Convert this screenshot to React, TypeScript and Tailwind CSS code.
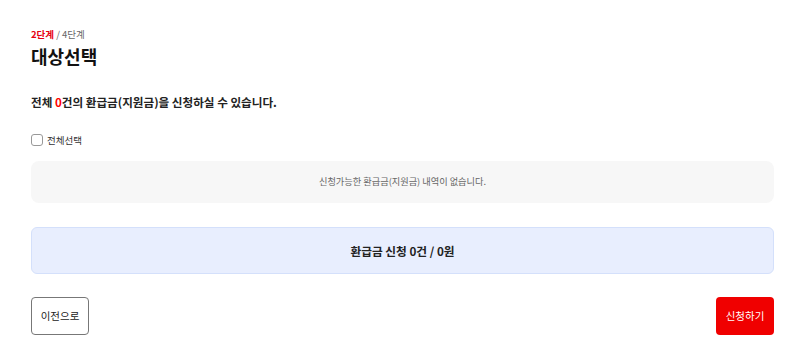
import { useState } from 'react';

const font = { fontFamily: '"Noto Sans CJK KR", "Noto Sans", sans-serif' };

const App = () => {
  const [checked, setChecked] = useState(false);

  return (
    <div
      className="w-[800px] h-[357px] bg-white pt-[27px] pl-[31px] pr-[26px] text-[#222]"
      style={font}
    >
      <p className="text-[9.5px] leading-[14px] text-[#666]">
        <span className="font-bold text-[#e60012]">2단계</span> / 4단계
      </p>
      <h1 className="mt-[3px] text-[18px] leading-[24px] font-bold text-[#111]">
        대상선택
      </h1>

      <p className="mt-[25px] text-[11.6px] leading-[18px] font-bold text-[#222]">
        전체 <span className="text-[#f00]">0</span>건의 환급금(지원금)을 신청하실 수
        있습니다.
      </p>

      <label className="mt-[22px] flex h-[14px] items-center gap-[4px] cursor-pointer">
        <input
          type="checkbox"
          checked={checked}
          onChange={() => setChecked(!checked)}
          className="h-[12px] w-[12px] appearance-none rounded-[3px] border border-[#999] bg-white"
        />
        <span className="text-[9.5px] text-[#333]">전체선택</span>
      </label>

      <div className="mt-[14px] flex h-[42px] items-center justify-center rounded-[8px] bg-[#f7f7f7]">
        <p className="text-[9.2px] text-[#666]">
          신청가능한 환급금(지원금) 내역이 없습니다.
        </p>
      </div>

      <div className="mt-[24px] flex h-[47px] items-center justify-center rounded-[6px] border border-[#d4e0fb] bg-[#e8eefe]">
        <p className="text-[11.7px] font-bold text-[#222]">환급금 신청 0건 / 0원</p>
      </div>

      <div className="mt-[23px] flex items-center justify-between">
        <button className="h-[38px] w-[58px] rounded-[4px] border border-[#777] bg-white text-[10.5px] text-[#222]">
          이전으로
        </button>
        <button className="h-[38px] w-[58px] rounded-[4px] bg-[#f00000] text-[10.5px] text-white">
          신청하기
        </button>
      </div>
    </div>
  );
};

export default App;
